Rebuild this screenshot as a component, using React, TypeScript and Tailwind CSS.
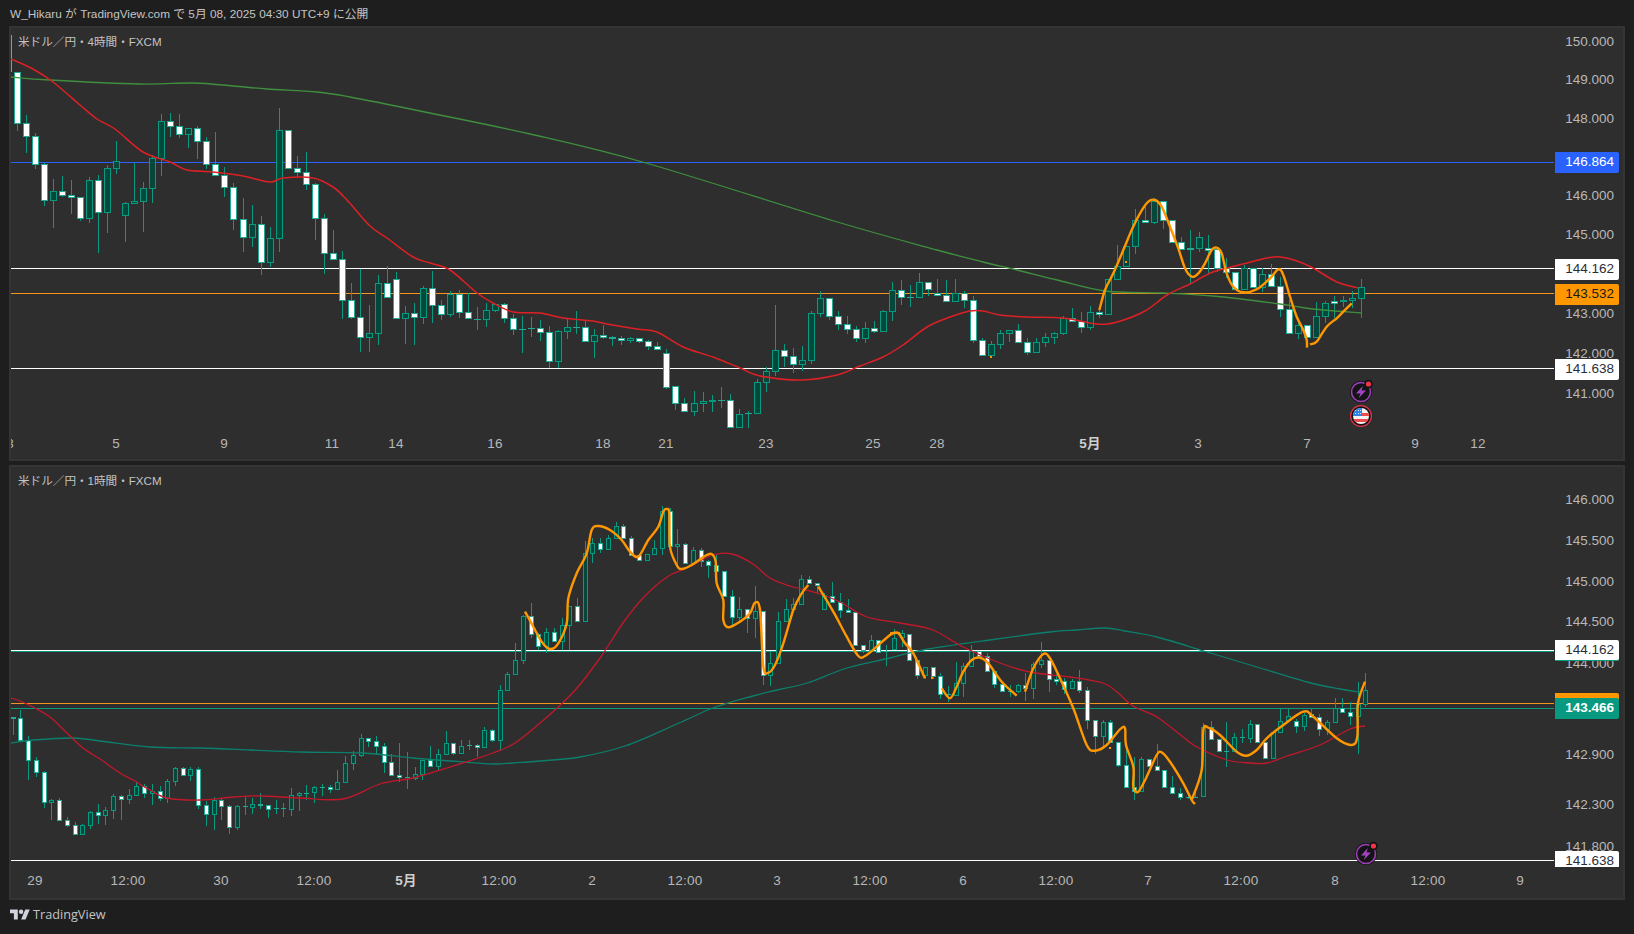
import React from "react";

type Pt = number[];
// high, body top, body bottom, low, kind (0 = white, 1 = dark)
type Bar = number[];

const bars4h: Bar[] = [
  [72,72,123,131,0],[115,123,136,153,0],[133,136,164,169,0],[163,164,200,206,0],[179,191,200,228,1],[176,191,195,197,0],[180,195,197,214,0],[197,197,218,221,0],[177,180,218,223,1],[175,180,212,253,0],
  [165,168,212,233,1],[141,161,168,174,1],[202,203,215,242,1],[163,201,203,204,1],[182,188,201,232,1],[155,158,188,203,1],[114,121,158,176,1],[113,121,126,137,0],[114,126,134,138,0],[128,128,134,148,1],
  [126,128,141,159,0],[137,141,164,169,0],[132,164,175,176,0],[167,175,187,197,0],[183,187,219,230,0],[198,219,237,252,0],[205,224,237,247,1],[216,224,262,275,0],[227,238,262,267,1],[108,130,238,252,1],
  [130,130,168,168,0],[156,168,172,177,0],[152,172,184,190,0],[183,184,218,240,0],[214,218,253,274,0],[230,253,259,259,0],[251,259,300,319,0],[283,300,317,319,0],[269,317,337,352,0],[305,333,337,352,1],
  [275,283,333,345,1],[266,283,297,297,0],[272,279,318,318,0],[306,313,318,344,1],[303,313,317,345,0],[286,288,317,324,1],[271,288,305,323,0],[300,305,314,320,0],[291,294,314,317,1],[290,294,312,318,0],
  [293,312,318,319,0],[307,319,319,330,0],[303,310,319,327,1],[304,304,310,312,1],[303,304,318,323,0],[314,318,329,335,0],[316,329,329,353,0],[317,328,328,337,0],[320,328,332,341,0],[326,332,361,368,0],
  [330,331,361,368,1],[318,327,331,339,1],[311,327,327,334,0],[320,327,341,341,0],[329,335,341,358,1],[325,335,337,339,0],[336,337,338,346,0],[336,338,340,345,0],[337,338,340,343,1],[338,338,341,343,0],
  [340,341,346,350,0],[342,346,349,349,0],[349,353,387,389,0],[386,386,403,410,0],[398,403,411,412,0],[391,403,411,416,1],[392,401,403,412,1],[395,400,401,412,1],[387,400,400,408,0],[394,400,427,429,0],
  [409,414,427,429,1],[411,413,413,428,0],[379,382,413,413,1],[367,371,382,392,1],[305,350,371,376,1],[344,350,356,367,0],[348,356,364,373,0],[346,360,364,371,1],[311,313,360,364,1],[291,298,313,317,1],
  [298,298,316,320,0],[311,316,324,330,0],[316,324,329,334,0],[326,329,338,342,0],[322,328,338,343,1],[321,328,331,333,0],[310,311,331,331,1],[282,290,311,321,1],[280,290,297,305,0],[285,297,297,307,0],
  [273,282,297,297,1],[282,282,289,296,0],[279,293,295,295,0],[280,295,301,302,0],[279,293,301,302,1],[291,293,300,308,0],[296,300,340,343,0],[338,340,355,355,0],[341,344,355,358,1],[330,333,344,349,1],
  [330,330,333,342,1],[324,330,342,343,0],[338,342,352,355,0],[338,342,352,353,1],[333,337,342,347,1],[332,333,337,344,1],[316,318,333,335,1],[308,318,321,321,0],[312,321,327,333,0],[306,312,327,330,1],
  [309,312,314,318,0],[279,279,314,315,1],[245,266,279,279,1],[246,246,266,266,1],[209,220,246,254,1],[207,220,222,222,0],[198,201,222,224,1],[201,201,220,229,0],[220,220,242,242,0],[237,242,249,249,0],
  [230,248,249,284,0],[232,237,248,252,1],[235,248,250,273,0],[249,249,268,272,0],[258,268,272,278,0],[272,272,289,290,0],[265,268,289,290,1],[268,268,287,287,0],[268,274,287,292,1],[264,274,286,287,0],
  [277,286,309,317,0],[300,309,333,333,0],[318,325,333,339,1],[325,325,337,337,0],[302,316,337,337,1],[301,303,316,323,1],[296,301,303,318,0],[296,300,301,307,1],[291,298,300,308,1],[279,287,298,318,1],
];

const bars1h: Bar[] = [
  [717,717,718,735,0],[710,718,740,740,0],[736,740,760,780,0],[757,760,772,777,0],[771,772,802,808,0],[799,800,802,820,1],[798,800,820,820,0],[817,820,825,827,0],[822,825,834,834,0],[824,825,834,834,1],
  [811,812,825,829,1],[804,812,815,824,0],[807,810,815,825,1],[794,796,810,819,1],[795,796,799,820,0],[789,795,799,804,1],[782,786,795,795,1],[784,786,793,798,0],[784,791,793,805,1],[786,791,798,801,0],
  [779,781,798,803,1],[767,768,781,786,1],[767,768,775,775,0],[767,769,775,781,1],[767,769,805,809,0],[801,805,814,826,0],[797,800,814,830,1],[798,800,806,820,0],[805,806,827,834,0],[805,806,827,830,1],
  [797,806,806,815,0],[798,804,807,814,1],[793,804,805,809,0],[805,805,809,818,0],[800,808,808,814,0],[803,808,808,817,0],[788,795,809,816,1],[792,793,795,811,1],[785,793,793,800,0],[786,787,792,803,1],
  [784,787,787,796,0],[785,787,789,793,0],[770,782,789,789,1],[756,763,782,782,1],[751,755,763,770,1],[734,738,755,757,1],[738,738,741,747,0],[736,741,746,755,0],[743,746,762,773,0],[754,762,775,775,0],
  [743,775,777,782,0],[752,777,777,789,0],[767,774,778,780,1],[760,760,774,780,1],[746,760,766,766,0],[749,754,766,770,1],[731,743,754,754,1],[743,743,753,755,0],[740,746,753,753,1],[740,745,745,750,0],
  [744,745,747,757,0],[727,730,747,747,1],[729,730,740,742,0],[685,690,740,751,1],[672,674,690,690,1],[643,660,674,674,1],[615,616,660,664,1],[603,616,634,638,0],[633,634,646,650,0],[628,632,646,653,1],
  [628,632,641,641,0],[618,625,641,650,1],[606,606,625,650,1],[598,606,621,621,0],[541,553,621,621,1],[538,543,553,563,1],[538,543,549,553,0],[535,538,549,549,1],[522,526,538,538,1],[524,526,538,538,0],
  [536,538,555,555,0],[555,555,560,560,0],[554,554,560,560,1],[540,548,554,554,1],[506,511,548,555,1],[508,511,546,546,0],[529,544,546,567,1],[543,544,563,564,0],[547,550,563,563,1],[548,550,561,567,0],
  [560,561,565,578,0],[555,565,571,573,0],[571,571,596,596,0],[590,596,617,627,0],[597,609,617,622,1],[609,609,618,633,0],[586,611,618,638,1],[611,611,675,685,0],[652,663,675,686,1],[612,621,663,663,1],
  [599,609,621,621,1],[598,604,609,609,1],[575,579,604,604,1],[576,579,583,584,0],[583,583,585,594,0],[593,595,609,609,1],[582,596,602,602,0],[593,602,610,618,0],[599,610,612,612,0],[612,612,645,645,0],
  [645,645,650,653,0],[635,640,650,650,1],[640,640,652,653,0],[645,651,651,666,1],[629,638,649,649,1],[630,633,637,647,1],[634,634,660,660,0],[660,660,675,679,0],[667,667,675,679,1],[667,667,676,679,0],
  [673,676,694,699,0],[686,694,694,702,0],[662,683,695,695,1],[663,666,683,697,1],[645,651,666,666,1],[651,651,656,656,0],[653,656,671,671,0],[671,671,684,688,0],[684,684,691,691,0],[685,691,691,697,1],
  [684,685,691,693,1],[673,685,688,701,0],[662,664,688,699,1],[642,660,664,668,1],[660,660,679,692,0],[674,679,681,685,0],[678,681,689,694,0],[679,681,688,688,1],[670,681,690,693,0],[687,690,720,729,0],
  [720,720,736,754,0],[720,722,736,747,1],[720,722,742,742,0],[742,742,765,767,0],[748,765,787,787,0],[757,787,791,800,0],[757,759,791,791,1],[759,759,766,766,0],[744,766,770,770,0],[770,770,787,787,0],
  [776,787,793,793,0],[788,793,797,800,0],[793,797,797,799,0],[789,797,797,798,0],[723,727,796,796,1],[721,727,739,739,0],[739,739,751,751,0],[722,751,751,767,0],[733,737,751,751,1],[729,737,737,743,0],
  [720,724,738,743,1],[724,724,742,743,0],[742,742,758,758,0],[732,732,758,758,1],[709,721,732,732,1],[708,716,720,720,1],[719,721,726,733,0],[713,715,726,731,1],[709,714,717,717,0],[714,717,729,736,0],
  [720,722,729,735,1],[698,708,722,723,1],[698,708,712,712,0],[702,712,716,725,0],[682,704,716,754,1],[673,690,704,707,1],
];

const fromZoom = (ox: number, oy: number, pts: Pt[]) => pts.map(([x, y]) => [ox + x / 3, oy + y / 3]);

const red4h: Pt[] = [[11,59],[33,69],[53,82],[80,105],[97,119],[115,129],[143,152],[170,162],[187,170],[213,172],[243,176],[270,182],[283,178],[313,178],[333,187],[347,200],[370,226],[387,238],[413,257],[430,263],[450,270],[477,293],[493,303],[513,312],[540,313],[563,318],[593,321],[607,324],[637,329],[657,332],[683,347],[713,357],[740,368],[760,376],[802,380],[837,375],[860,366],[883,357],[903,345],[927,327],[950,317],[970,311],[983,311],[1000,315],[1027,317],[1063,318],[1097,324],[1117,322],[1145,311],[1167,295],[1190,284],[1213,272],[1243,264],[1267,258],[1280,257],[1297,261],[1313,268],[1337,282],[1358,288]];
const green4h: Pt[] = [[11,77],[50,80],[140,84],[193,83],[233,86],[267,89],[317,92],[350,97],[420,111],[530,134],[646,163],[834,221],[937,250],[983,262],[1017,270],[1057,280],[1105,291],[1163,293],[1213,296],[1280,304],[1313,309],[1362,313]];
const orange4hA = fromZoom(1080, 180, [[58,390],[75,330],[100,280],[130,210],[155,150],[180,100],[205,65],[225,60],[245,80],[270,140],[295,205],[315,265],[335,290],[355,280],[375,250],[395,210],[410,203],[425,220],[440,280],[460,320],[490,337],[530,328],[570,295],[595,268],[610,285],[630,350],[650,410],[670,450],[680,480],[681,503]]);
const orange4hB = fromZoom(1080, 180, [[690,493],[710,485],[740,440],[770,415],[790,395],[815,370]]);

const red1h: Pt[] = [[11,698],[20,701],[33,707],[50,717],[67,733],[83,748],[100,759],[120,773],[133,780],[150,790],[167,798],[200,800],[233,797],[260,796],[300,798],[343,799],[380,784],[413,778],[447,768],[493,753],[515,743],[540,723],[555,710],[577,688],[600,658],[623,623],[643,598],[667,577],[687,568],[713,555],[732,554],[753,564],[770,578],[790,586],[817,593],[840,602],[867,617],[900,623],[933,630],[963,647],[1000,663],[1030,672],[1070,677],[1103,683],[1117,692],[1133,706],[1157,717],[1183,737],[1197,747],[1227,760],[1250,763],[1267,763],[1287,756],[1320,745],[1350,729],[1365,726]];
const teal1h: Pt[] = [[11,743],[33,740],[73,738],[100,741],[150,747],[200,748],[250,750],[300,752],[363,753],[413,758],[463,762],[493,764],[513,763],[540,761],[580,757],[625,746],[677,724],[713,708],[753,696],[777,690],[807,683],[847,668],[890,658],[923,650],[990,640],[1050,632],[1077,630],[1105,628],[1125,631],[1157,637],[1207,652],[1257,667],[1307,682],[1340,689],[1360,692]];
const orange1h: Pt[][] = [
  fromZoom(500, 490, [[75,365],[100,410],[125,455],[150,477],[175,460],[200,400],[205,325],[230,250],[260,190],[275,120],[295,108],[330,120],[365,150],[390,185],[415,200],[445,150],[475,110],[490,65],[500,57],[508,70],[510,170],[530,225],[545,237],[575,225],[615,198],[635,192],[647,215],[650,280],[670,330],[670,390],[685,412],[720,395],[750,370],[765,338],[780,360],[790,530],[805,548],[825,525],[850,460],[880,360],[905,310],[925,285]]),
  fromZoom(500, 490, [[955,290],[1000,365],[1040,440],[1075,498],[1095,498],[1130,470],[1170,435],[1190,428],[1200,430]]),
  fromZoom(890, 630, [[0,10],[25,10],[45,40],[70,70],[105,145]]),
  fromZoom(890, 630, [[155,175],[180,205],[200,170],[220,125],[245,90],[270,83],[295,100],[335,155],[380,197]]),
  fromZoom(890, 630, [[405,185],[430,115],[460,72],[480,85],[510,145],[550,235],[590,345],[615,362],[650,345],[690,298],[705,295],[708,345],[730,410],[730,470],[745,485],[770,440],[800,375],[815,367],[840,395],[880,460],[905,510],[915,522]]),
  fromZoom(890, 630, [[905,510],[935,420],[940,300],[955,293],[990,315],[1040,365],[1070,377],[1100,360],[1130,325],[1180,285],[1240,245],[1270,260],[1340,325],[1385,345],[1402,320],[1404,220],[1425,155]]),
];

// catmull-rom through the points, reads closer to the hand drawn curves than a polyline
const smooth = (p: Pt[]) => {
  let d = `M${p[0][0]} ${p[0][1]}`;
  for (let i = 0; i < p.length - 1; i++) {
    const a = p[Math.max(i - 1, 0)], b = p[i], c = p[i + 1], e = p[Math.min(i + 2, p.length - 1)];
    const k = 6;
    d += `C${(b[0] + (c[0] - a[0]) / k).toFixed(1)} ${(b[1] + (c[1] - a[1]) / k).toFixed(1)} ${(c[0] - (e[0] - b[0]) / k).toFixed(1)} ${(c[1] - (e[1] - b[1]) / k).toFixed(1)} ${c[0].toFixed(1)} ${c[1].toFixed(1)}`;
  }
  return d;
};

const Candles = ({ data, x0, step, half }: { data: Bar[]; x0: number; step: number; half: number }) => (
  <g shapeRendering="crispEdges">
    {data.map(([h, t, b, l, kind], i) => {
      const cx = Math.round(x0 + step * i) + 0.5;
      return (
        <g key={i}>
          <line x1={cx} x2={cx} y1={h} y2={l} stroke="#089981" strokeWidth={1} />
          {t === b ? (
            <rect x={cx - half - 0.5} y={t} width={half * 2 + 1} height={1} fill="#22ab94" />
          ) : (
            <rect
              x={cx - half}
              y={t + 0.5}
              width={half * 2}
              height={Math.max(b - t, 1)}
              fill={kind ? "#04473b" : "#ffffff"}
              stroke={kind ? "#089981" : "#22ab94"}
              strokeWidth={1}
            />
          )}
        </g>
      );
    })}
  </g>
);

const HLine = ({ y, color }: { y: number; color: string }) => (
  <line x1={0} x2={1560} y1={y + 0.5} y2={y + 0.5} stroke={color} strokeWidth={1} shapeRendering="crispEdges" />
);

const BoltMark = ({ x, y }: { x: number; y: number }) => (
  <g transform={`translate(${x} ${y})`}>
    <circle r={11} fill="#131313" />
    <circle r={9.5} fill="#141414" stroke="#9c3fb8" strokeWidth={1.6} />
    <path d="M1.8 -6 L-5 1.4 H-0.6 L-2.2 6 L5 -1.6 H0.6 Z" fill="#a344c4" />
    <circle cx={7.5} cy={-8} r={4.2} fill="#131313" />
    <circle cx={7.5} cy={-8} r={2.6} fill="#f23645" />
  </g>
);

const FlagMark = ({ x, y }: { x: number; y: number }) => (
  <g transform={`translate(${x} ${y})`}>
    <circle r={10.4} fill="#141414" stroke="#e0334a" strokeWidth={1.3} />
    <clipPath id="usflag">
      <circle r={8} />
    </clipPath>
    <g clipPath="url(#usflag)">
      <rect x={-8} y={-8} width={16} height={16} fill="#f4f4f4" />
      <rect x={-8} y={-3} width={16} height={3} fill="#ef4a4f" />
      <rect x={-8} y={3} width={16} height={3} fill="#ef4a4f" />
      <rect x={-8} y={-8} width={9} height={8} fill="#2d83e6" />
      <path d="M-6 -6h1v1h-1zM-3 -6h1v1h-1zM-1 -6h1v1h-1zM-6 -3h1v1h-1zM-3 -3h1v1h-1zM-1 -3h1v1h-1z" fill="#d8e8fb" />
    </g>
  </g>
);

type Tick = [number, string];
type Tag = { y: number; text: string; bg: string; color: string };

const PriceAxis = ({ top, ticks, tags }: { top: number; ticks: Tick[]; tags: Tag[] }) => (
  <div className="relative w-[69px] shrink-0 overflow-hidden font-['Liberation_Sans',sans-serif] text-[13.5px]">
    {ticks.map(([y, text]) => (
      <div
        key={text}
        className="absolute left-0 flex h-[20px] w-[64px] items-center justify-end pr-[4px] text-[#b8b8b8]"
        style={{ top: y - top - 10 }}
      >
        {text}
      </div>
    ))}
    {tags.map((t) => (
      <div
        key={t.y}
        className={`absolute left-[1px] flex h-[21px] w-[64px] items-center justify-end rounded-r-[2px] pr-[5px] ${t.bg} ${t.color}`}
        style={{ top: t.y - top - 10.5 }}
      >
        {t.text}
      </div>
    ))}
  </div>
);

type TimeLabel = [number, string, boolean?];

const TimeAxis = ({ labels, labelTop }: { labels: TimeLabel[]; labelTop: string }) => (
  <div className="relative h-full flex-1 overflow-hidden font-['Liberation_Sans','Noto_Sans_CJK_JP',sans-serif] text-[13.5px] tracking-[0.2px] text-[#b8b8b8]">
    {labels.map(([x, text, bold], i) => (
      <span
        key={i}
        className={`absolute ${labelTop} -translate-x-1/2 ${bold ? "font-bold text-[#cfcfcf]" : ""}`}
        style={{ left: x - 11 }}
      >
        {text}
      </span>
    ))}
  </div>
);

const ChartPanel = ({
  title,
  top,
  labelTop,
  ticks,
  tags,
  times,
  children,
}: {
  title: string;
  top: number;
  labelTop: string;
  ticks: Tick[];
  tags: Tag[];
  times: TimeLabel[];
  children: React.ReactNode;
}) => (
  <div className="flex h-[435px] w-[1616px] flex-col border-2 border-[#343434] bg-[#2e2e2e]">
    <div className="relative flex h-[400px]">
      <svg width={1543} height={400} viewBox={`11 ${top} 1543 400`} className="block shrink-0">
        {children}
      </svg>
      <PriceAxis top={top} ticks={ticks} tags={tags} />
      <div className="absolute left-[7px] top-[5px] font-['Liberation_Sans','Noto_Sans_CJK_JP',sans-serif] text-[11.6px] text-[#c4c4c4]">
        {title}
      </div>
    </div>
    <div className="flex h-[31px]">
      <TimeAxis labels={times} labelTop={labelTop} />
      <div className="w-[69px] shrink-0" />
    </div>
  </div>
);

export default function App() {
  return (
    <div className="flex h-[934px] w-[1634px] flex-col overflow-hidden bg-[#1e1e1e]">
      <div className="flex h-[26px] items-center pl-[10px] pt-[3px] font-['Liberation_Sans','Noto_Sans_CJK_JP',sans-serif] text-[11.8px] text-[#c4c4c4]">
        W_Hikaru が TradingView.com で 5月 08, 2025 04:30 UTC+9 に公開
      </div>
      <div className="flex flex-col gap-[4px] pl-[9px]">
        <ChartPanel
          title="米ドル／円・4時間・FXCM"
          top={28}
          labelTop="top-[6px]"
          ticks={[[42,"150.000"],[80,"149.000"],[119,"148.000"],[196,"146.000"],[235,"145.000"],[314,"143.000"],[354,"142.000"],[394,"141.000"]]}
          tags={[
            { y: 162.5, text: "146.864", bg: "bg-[#2962ff]", color: "text-white" },
            { y: 269, text: "144.162", bg: "bg-white", color: "text-[#2a2e39]" },
            { y: 294, text: "143.532", bg: "bg-[#ff9800]", color: "text-[#1c1c1c]" },
            { y: 369, text: "141.638", bg: "bg-white", color: "text-[#2a2e39]" },
          ]}
          times={[[10,"3"],[116,"5"],[224,"9"],[332,"11"],[396,"14"],[495,"16"],[603,"18"],[666,"21"],[766,"23"],[873,"25"],[937,"28"],[1090,"5月",true],[1198,"3"],[1307,"7"],[1415,"9"],[1478,"12"]]}
        >
          <HLine y={162} color="#2962ff" />
          <HLine y={268} color="#ffffff" />
          <HLine y={293} color="#f7941d" />
          <HLine y={368} color="#ffffff" />
          <line x1={11.5} x2={11.5} y1={35} y2={72} stroke="#4db6a3" />
          <Candles data={bars4h} x0={17} step={9.02} half={3} />
          <path d={smooth(green4h)} fill="none" stroke="#3f8f3f" strokeWidth={1.3} />
          <path d={smooth(red4h)} fill="none" stroke="#dd2025" strokeWidth={1.5} />
          <path d={smooth(orange4hA)} fill="none" stroke="#ff9800" strokeWidth={2.4} strokeLinejoin="round" />
          <path d={smooth(orange4hB)} fill="none" stroke="#ff9800" strokeWidth={2.4} strokeLinejoin="round" />
          <rect x={1125} y={261} width={2} height={2} fill="#ff9800" />
          <rect x={990} y={356} width={2} height={2} fill="#ff9800" />
          <BoltMark x={1361} y={392} />
          <FlagMark x={1361} y={416} />
        </ChartPanel>
        <ChartPanel
          title="米ドル／円・1時間・FXCM"
          top={467}
          labelTop="top-[4px]"
          ticks={[[500,"146.000"],[541,"145.500"],[582,"145.000"],[622,"144.500"],[664,"144.000"],[755,"142.900"],[805,"142.300"],[847,"141.800"]]}
          tags={[
            { y: 650.5, text: "144.162", bg: "bg-white border-b border-[#089981]", color: "text-[#2a2e39]" },
            { y: 703.5, text: "", bg: "bg-[#ff9800]", color: "text-[#ff9800]" },
            { y: 708.5, text: "143.466", bg: "bg-[#089981]", color: "text-white font-bold" },
            { y: 861, text: "141.638", bg: "bg-white", color: "text-[#2a2e39]" },
          ]}
          times={[[35,"29"],[128,"12:00"],[221,"30"],[314,"12:00"],[406,"5月",true],[499,"12:00"],[592,"2"],[685,"12:00"],[777,"3"],[870,"12:00"],[963,"6"],[1056,"12:00"],[1148,"7"],[1241,"12:00"],[1335,"8"],[1428,"12:00"],[1520,"9"]]}
        >
          <HLine y={650} color="#ffffff" />
          <HLine y={651} color="#089981" />
          <HLine y={703} color="#f7941d" />
          <HLine y={708} color="#089981" />
          <HLine y={860} color="#ffffff" />
          <Candles data={bars1h} x0={12.7} step={7.73} half={2} />
          <path d={smooth(teal1h)} fill="none" stroke="#0c7f6c" strokeWidth={1.3} />
          <path d={smooth(red1h)} fill="none" stroke="#c2182b" strokeWidth={1.3} />
          {orange1h.map((seg, i) => (
            <path key={i} d={smooth(seg)} fill="none" stroke="#ff9800" strokeWidth={2.4} strokeLinejoin="round" />
          ))}
          <rect x={931} y={677} width={2} height={2} fill="#ff9800" />
          <rect x={1109} y={747} width={2} height={2} fill="#ff9800" />
          <BoltMark x={1366} y={854} />
        </ChartPanel>
      </div>
      <div className="flex flex-1 items-center gap-[3px] pb-[4px] pl-[10px] font-['Open_Sans',sans-serif] text-[12.7px] text-[#c4c4c4]">
        <svg width={20} height={16} viewBox="0 0 36 28" fill="#d1d4dc">
          <path d="M14 22H7V11H0V4h14v18zM28 22h-8l7.5-18h8L28 22z" />
          <circle cx={20} cy={8} r={4} />
        </svg>
        TradingView
      </div>
    </div>
  );
}
